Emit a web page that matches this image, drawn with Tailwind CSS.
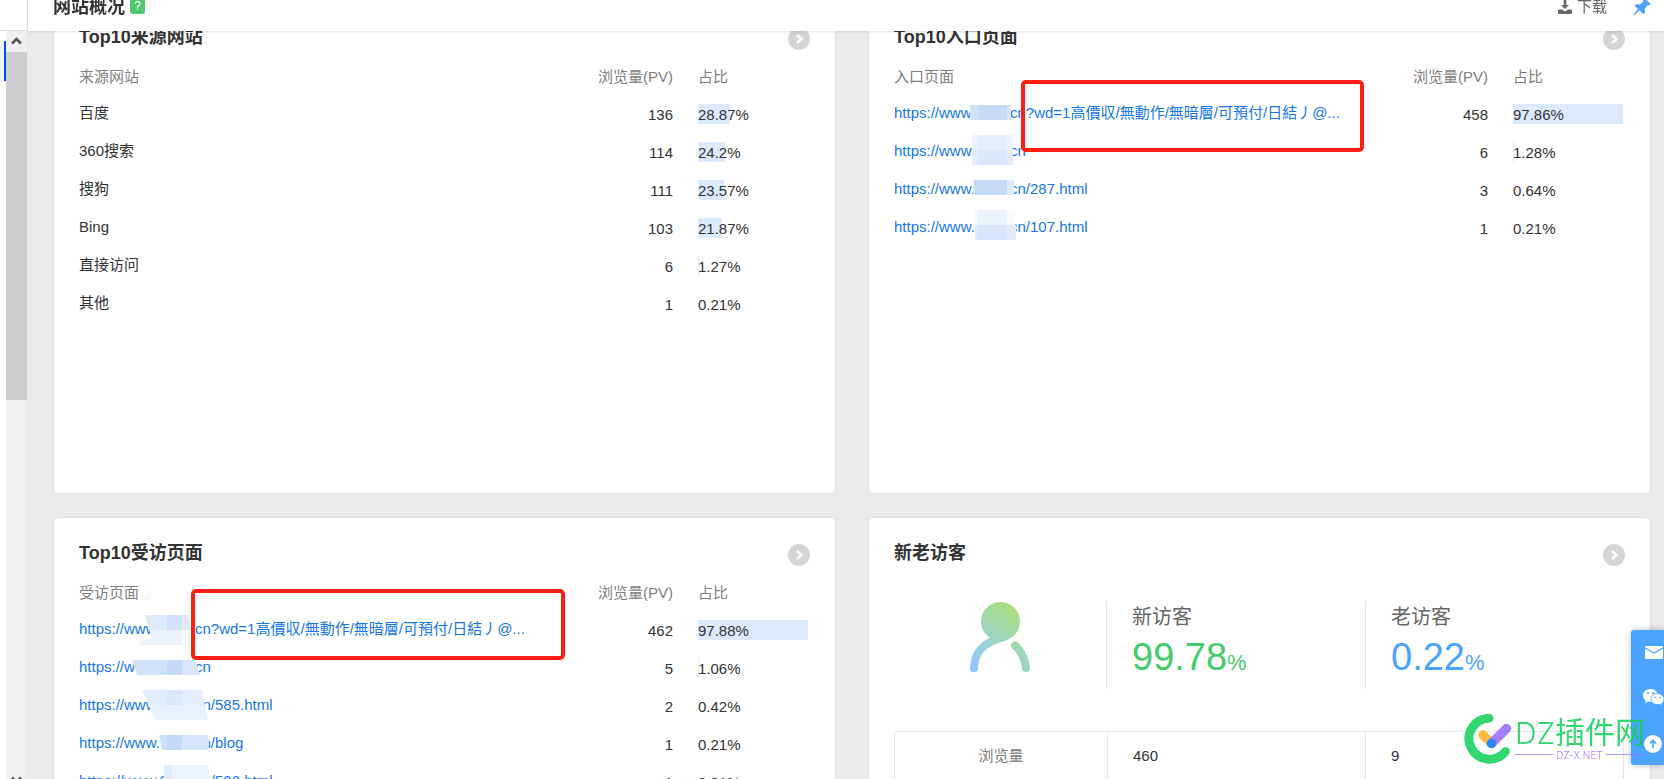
<!DOCTYPE html>
<html lang="zh-CN">
<head>
<meta charset="utf-8">
<title>网站概况</title>
<script src="https://cdn.jsdelivr.net/npm/@tailwindcss/browser@4"></script>
</head>
<body class="h-screen overflow-hidden bg-[#ebebeb] font-['Liberation_Sans','Noto_Sans_CJK_SC',sans-serif] text-[15px] leading-5 text-[#333]">
<svg class="hidden" aria-hidden="true">
  <symbol id="more" viewBox="0 0 22 22"><circle cx="11" cy="11" r="11" fill="#d4d5d7"/><path d="M9 7l4.500 4-4.500 4" fill="none" stroke="#fff" stroke-width="2.400"/></symbol>
</svg>

<div class="flex h-full">
  <!-- side navigation, collapsed, with its scroll bar -->
  <aside class="flex w-7 shrink-0 flex-col border-r border-[#e6e6e6] bg-white">
    <div class="h-[31px] shrink-0 border-b border-[#e2e2e2]"></div>
    <div class="flex min-h-0 flex-1">
      <div class="w-[6px] pt-[10px]"><div class="h-10 border-r-2 border-[#0052d9] bg-[#f0f4fa]"></div></div>
      <div class="flex flex-1 flex-col justify-between overflow-hidden bg-[#f0f0f0]">
        <div class="flex flex-col">
          <svg class="h-[21px] w-[21px]" viewBox="0 0 21 21"><path d="M6 12.500l4.500-4.500L15 12.500" fill="none" stroke="#555" stroke-width="2.600"/></svg>
          <div class="h-[348px] bg-[#cdcdcd]"></div>
        </div>
        <svg class="-mb-3 h-[21px] w-[21px]" viewBox="0 0 21 21"><path d="M6 7.500l4.500 4.500L15 7.500" fill="none" stroke="#555" stroke-width="2.600"/></svg>
      </div>
    </div>
  </aside>

  <div class="min-w-0 flex-1">
    <header class="fixed -top-[18px] right-0 left-7 z-10 flex h-[49px] items-center bg-white pr-3 pl-[25px] shadow-[0_1px_3px_rgba(0,0,0,0.12)]">
      <h1 class="text-[18px] font-bold">网站概况</h1>
      <button class="ml-[5px] h-[15px] w-[15px] rounded-[3px] bg-[#4fc76f] text-[12px] leading-[15px] text-white" aria-label="帮助">?</button>
      <button class="ml-auto flex items-center gap-[5px] text-[#666]">
        <svg class="h-[14px] w-[14px]" viewBox="0 0 14 14" fill="#666"><path d="M5.700 0h2.600v5h2.700L7 9 3 5h2.700z"/><path d="M1 9.500h3l3 2 3-2h3q1 0 1 1V13q0 1-1 1H1q-1 0-1-1v-2.500q0-1 1-1z"/></svg>
        下载
      </button>
      <button class="ml-[25px]" aria-label="固定">
        <svg class="h-5 w-5" viewBox="0 0 20 20" fill="#4ba4ff"><path d="M12 1l7 6-1.500 1.200-1.500-.2-3.200 3.500.2 4-1.500 1.500-4-3.700L2 18.500 1.300 18 5.800 12 2.500 8.500 4 7.200l4 .3 3.500-3.300-.8-1.700z"/></svg>
      </button>
    </header>

    <main class="grid grid-cols-2 gap-x-8 gap-y-[23px] pt-px pr-[13px] pl-[25px]">

      <section class="relative h-[493px] rounded-sm border border-[#e0e0e0] bg-white pr-[26px] pl-[25px]">
        <div class="flex justify-between pt-[23px]">
          <h2 class="h-6 text-[18px] leading-6 font-bold">Top10来源网站</h2>
          <button class="-mr-px mt-[3px] h-[22px] w-[22px]" aria-label="更多"><svg class="h-full w-full"><use href="#more"/></svg></button>
        </div>
        <table class="mt-[9px] w-full">
          <thead><tr class="h-9 text-[#808080]"><th class="pb-px text-left font-normal">来源网站</th><th class="w-24 pb-px text-right font-normal">浏览量(PV)</th><th class="w-[136px] pb-px pl-[25px] text-left font-normal">占比</th></tr></thead>
          <tbody>
            <tr class="h-[38px]"><td class="pb-[3px]">百度</td><td class="pt-[2px] text-right">136</td><td class="pl-[25px]"><div class="h-5 bg-[#dceafd] leading-[22px] whitespace-nowrap" style="width:32px">28.87%</div></td></tr>
            <tr class="h-[38px]"><td class="pb-[3px]">360搜索</td><td class="pt-[2px] text-right">114</td><td class="pl-[25px]"><div class="h-5 bg-[#dceafd] leading-[22px] whitespace-nowrap" style="width:27px">24.2%</div></td></tr>
            <tr class="h-[38px]"><td class="pb-[3px]">搜狗</td><td class="pt-[2px] text-right">111</td><td class="pl-[25px]"><div class="h-5 bg-[#dceafd] leading-[22px] whitespace-nowrap" style="width:26px">23.57%</div></td></tr>
            <tr class="h-[38px]"><td class="pb-[3px]">Bing</td><td class="pt-[2px] text-right">103</td><td class="pl-[25px]"><div class="h-5 bg-[#dceafd] leading-[22px] whitespace-nowrap" style="width:24px">21.87%</div></td></tr>
            <tr class="h-[38px]"><td class="pb-[3px]">直接访问</td><td class="pt-[2px] text-right">6</td><td class="pl-[25px]"><div class="h-5 bg-[#dceafd] leading-[22px] whitespace-nowrap" style="width:1px">1.27%</div></td></tr>
            <tr class="h-[38px]"><td class="pb-[3px]">其他</td><td class="pt-[2px] text-right">1</td><td class="pl-[25px]"><div class="h-5 bg-[#dceafd] leading-[22px] whitespace-nowrap" style="width:0px">0.21%</div></td></tr>
          </tbody>
        </table>
      </section>

      <section class="relative h-[493px] rounded-sm border border-[#e0e0e0] bg-white pr-[26px] pl-[25px]">
        <div class="flex justify-between pt-[23px]">
          <h2 class="h-6 text-[18px] leading-6 font-bold">Top10入口页面</h2>
          <button class="-mr-px mt-[3px] h-[22px] w-[22px]" aria-label="更多"><svg class="h-full w-full"><use href="#more"/></svg></button>
        </div>
        <table class="mt-[9px] w-full">
          <thead><tr class="h-9 text-[#808080]"><th class="pb-px text-left font-normal">入口页面</th><th class="w-24 pb-px text-right font-normal">浏览量(PV)</th><th class="w-[136px] pb-px pl-[25px] text-left font-normal">占比</th></tr></thead>
          <tbody>
            <tr class="h-[38px]"><td class="pb-[3px]"><a href="#" class="flex whitespace-nowrap text-[#1677e6]"><span class="w-[116px]">https://www.</span><span>cn?wd=1高價収/無動作/無暗層/可預付/日結丿@...</span></a></td><td class="pt-[2px] text-right">458</td><td class="pl-[25px]"><div class="h-5 bg-[#dceafd] leading-[22px] whitespace-nowrap" style="width:110px">97.86%</div></td></tr>
            <tr class="h-[38px]"><td class="pb-[3px]"><a href="#" class="flex whitespace-nowrap text-[#1677e6]"><span class="w-[116px]">https://www.</span><span>cn</span></a></td><td class="pt-[2px] text-right">6</td><td class="pl-[25px]"><div class="h-5 bg-[#dceafd] leading-[22px] whitespace-nowrap" style="width:1px">1.28%</div></td></tr>
            <tr class="h-[38px]"><td class="pb-[3px]"><a href="#" class="flex whitespace-nowrap text-[#1677e6]"><span class="w-[116px]">https://www.</span><span>cn/287.html</span></a></td><td class="pt-[2px] text-right">3</td><td class="pl-[25px]"><div class="h-5 bg-[#dceafd] leading-[22px] whitespace-nowrap" style="width:0px">0.64%</div></td></tr>
            <tr class="h-[38px]"><td class="pb-[3px]"><a href="#" class="flex whitespace-nowrap text-[#1677e6]"><span class="w-[116px]">https://www.</span><span>cn/107.html</span></a></td><td class="pt-[2px] text-right">1</td><td class="pl-[25px]"><div class="h-5 bg-[#dceafd] leading-[22px] whitespace-nowrap" style="width:0px">0.21%</div></td></tr>
          </tbody>
        </table>
        <!-- pixelated cover over the domain names -->
        <svg class="pointer-events-none absolute top-[103px] left-[101px] h-[136px] w-[46px]" viewBox="0 0 46 136" shape-rendering="crispEdges">
          <path d="M0 0h41v15H0z" fill="#d9e6fa"/><path d="M1 0h8v15H1z" fill="#d2e2f9"/><path d="M9 0h28v15H9z" fill="#c7dbf7"/>
          <path d="M2 30h41v15H2z" fill="#edf4fd"/><path d="M8 30h29v15H8z" fill="#e6effc"/><path d="M2 45h41v15H2z" fill="#e2ecfb"/><path d="M8 45h29v15H8z" fill="#dbe8fb"/>
          <path d="M3 75h41v15H3z" fill="#dfeafb"/><path d="M4 75h33v15H4z" fill="#c7dbf7"/>
          <path d="M4 105h41v15H4z" fill="#f8fafe"/><path d="M7 105h30v15H7z" fill="#ebf3fd"/><path d="M5 120h41v15H5z" fill="#dfebfb"/><path d="M7 120h30v15H7z" fill="#d9e6f9"/>
        </svg>
        <div class="pointer-events-none absolute top-[78px] left-[152px] h-[72px] w-[343px] rounded-[5px] border-4 border-[#ff1f12]"></div>
      </section>

      <section class="relative h-[493px] rounded-sm border border-[#e0e0e0] bg-white pr-[26px] pl-[25px]">
        <div class="flex justify-between pt-[23px]">
          <h2 class="h-6 text-[18px] leading-6 font-bold">Top10受访页面</h2>
          <button class="-mr-px mt-[3px] h-[22px] w-[22px]" aria-label="更多"><svg class="h-full w-full"><use href="#more"/></svg></button>
        </div>
        <table class="mt-[9px] w-full">
          <thead><tr class="h-9 text-[#808080]"><th class="pb-px text-left font-normal">受访页面</th><th class="w-24 pb-px text-right font-normal">浏览量(PV)</th><th class="w-[136px] pb-px pl-[25px] text-left font-normal">占比</th></tr></thead>
          <tbody>
            <tr class="h-[38px]"><td class="pb-[3px]"><a href="#" class="flex whitespace-nowrap text-[#1677e6]"><span class="w-[116px]">https://www.</span><span>cn?wd=1高價収/無動作/無暗層/可預付/日結丿@...</span></a></td><td class="pt-[2px] text-right">462</td><td class="pl-[25px]"><div class="h-5 bg-[#dceafd] leading-[22px] whitespace-nowrap" style="width:110px">97.88%</div></td></tr>
            <tr class="h-[38px]"><td class="pb-[3px]"><a href="#" class="flex whitespace-nowrap text-[#1677e6]"><span class="w-[116px]">https://www.</span><span>cn</span></a></td><td class="pt-[2px] text-right">5</td><td class="pl-[25px]"><div class="h-5 bg-[#dceafd] leading-[22px] whitespace-nowrap" style="width:1px">1.06%</div></td></tr>
            <tr class="h-[38px]"><td class="pb-[3px]"><a href="#" class="flex whitespace-nowrap text-[#1677e6]"><span class="w-[116px]">https://www.</span><span>cn/585.html</span></a></td><td class="pt-[2px] text-right">2</td><td class="pl-[25px]"><div class="h-5 bg-[#dceafd] leading-[22px] whitespace-nowrap" style="width:0px">0.42%</div></td></tr>
            <tr class="h-[38px]"><td class="pb-[3px]"><a href="#" class="flex whitespace-nowrap text-[#1677e6]"><span class="w-[116px]">https://www.</span><span>cn/blog</span></a></td><td class="pt-[2px] text-right">1</td><td class="pl-[25px]"><div class="h-5 bg-[#dceafd] leading-[22px] whitespace-nowrap" style="width:0px">0.21%</div></td></tr>
            <tr class="h-[38px]"><td class="pb-[3px]"><a href="#" class="flex whitespace-nowrap text-[#1677e6]"><span class="w-[116px]">https://www.9</span><span>cn/502.html</span></a></td><td class="pt-[2px] text-right">1</td><td class="pl-[25px]"><div class="h-5 bg-[#dceafd] leading-[22px] whitespace-nowrap" style="width:0px">0.21%</div></td></tr>
          </tbody>
        </table>
        <!-- pixelated cover over the domain names -->
        <svg class="pointer-events-none absolute top-[67px] left-[76px] h-[204px] w-[84px]" viewBox="0 0 84 204">
          <defs><clipPath id="cover"><path d="M13 15L21 4v11zM15 30h43l3 15v15H7q5-6 15-6zM2 75h63l5 15H7zM12 105h60l6 30H25zM29 150h50v15H32zM34 180h45v24H34z"/></clipPath></defs>
          <g clip-path="url(#cover)" shape-rendering="crispEdges">
            <path d="M0 0h84v15H0z" fill="#f5f7fd"/>
            <path d="M0 30h84v15H0z" fill="#dfeafa"/><path d="M37 30h15v15H37z" fill="#cfe0f8"/><path d="M0 45h84v15H0z" fill="#ecf3fd"/><path d="M52 45h15v15H52z" fill="#f7faff"/>
            <path d="M0 75h84v15H0z" fill="#d0e1f8"/><path d="M37 75h15v15H37z" fill="#c5d9f6"/><path d="M52 75h30v15H52z" fill="#dae7fa"/>
            <path d="M0 105h84v15H0z" fill="#e3edfb"/><path d="M37 105h15v15H37z" fill="#dbe7fa"/><path d="M0 120h84v15H0z" fill="#eaf2fd"/>
            <path d="M0 150h37v15H0z" fill="#cfe0f9"/><path d="M37 150h15v15H37z" fill="#c4d9f7"/><path d="M52 150h32v15H52z" fill="#d8e6fa"/>
            <path d="M0 180h42v24H0z" fill="#e2ecfc"/><path d="M42 180h42v24H42z" fill="#edf4fd"/>
          </g>
        </svg>
        <div class="pointer-events-none absolute top-[71px] left-[137px] h-[71px] w-[374px] rounded-[5px] border-4 border-[#ff1f12]"></div>
      </section>

      <section class="relative h-[493px] rounded-sm border border-[#e0e0e0] bg-white pr-[26px] pl-[25px]">
        <div class="flex justify-between pt-[23px]">
          <h2 class="h-6 text-[18px] leading-6 font-bold">新老访客</h2>
          <button class="-mr-px mt-[3px] h-[22px] w-[22px]" aria-label="更多"><svg class="h-full w-full"><use href="#more"/></svg></button>
        </div>
        <div class="mt-[35px] grid h-[88px] grid-cols-[212px_1fr_1fr]">
          <div class="flex justify-center">
            <svg class="h-[72px] w-[60px]" viewBox="0 0 60 72">
              <defs><linearGradient id="visitor" gradientUnits="userSpaceOnUse" x1="3" y1="62" x2="44" y2="6"><stop offset="0" stop-color="#94c9ff"/><stop offset=".45" stop-color="#9ad4c6"/><stop offset="1" stop-color="#a8df7a"/></linearGradient>
              <linearGradient id="visitorArm" gradientUnits="userSpaceOnUse" x1="56" y1="70" x2="40" y2="40"><stop offset="0" stop-color="#9bd3c8"/><stop offset="1" stop-color="#a0d8a9"/></linearGradient></defs>
              <g fill="url(#visitor)"><circle cx="30.500" cy="20.500" r="19.500"/><path d="M20 37C8 42 1 51 0 67a4 4 0 0 0 8 .500C9 51 17 45 36 39.500L28 30z"/></g>
              <path d="M45 44.500C51 50 55 58 56 67" fill="none" stroke="url(#visitorArm)" stroke-width="8" stroke-linecap="round"/>
            </svg>
          </div>
          <div class="border-l border-[#e6e6e6] pt-1 pl-[25px] text-[#47cb6c]">
            <div class="text-[20px] leading-6 text-[#666]">新访客</div>
            <div class="mt-[6px] text-[38px] leading-11">99.78<span class="text-[22px]">%</span></div>
          </div>
          <div class="border-l border-[#e6e6e6] pt-1 pl-[25px] text-[#4ba4ff]">
            <div class="text-[20px] leading-6 text-[#666]">老访客</div>
            <div class="mt-[6px] text-[38px] leading-11">0.22<span class="text-[22px]">%</span></div>
          </div>
        </div>
        <table class="mt-[42px] w-full table-fixed border-collapse">
          <tbody><tr class="h-[49px]"><th class="w-[213px] border border-[#e6e6e6] font-normal text-[#808080]">浏览量</th><td class="border border-[#e6e6e6] pl-[25px]">460</td><td class="border border-[#e6e6e6] pl-[25px]">9</td></tr>
          <tr class="h-[49px]"><th class="border border-[#e6e6e6]"></th><td class="border border-[#e6e6e6]"></td><td class="border border-[#e6e6e6]"></td></tr></tbody>
        </table>
      </section>
    </main>
  </div>
</div>

<!-- floating contact bar, partly beyond the right edge -->
<nav class="fixed right-0 bottom-[14px] z-20 flex h-[135px] w-[33px] flex-col items-end justify-between rounded-l-[3px] bg-[#4ba4ff] pt-4 pb-3 shadow-[0_0_6px_rgba(0,0,0,0.25)]">
  <button class="mr-px" aria-label="邮件"><svg class="block h-[13px] w-[18px]" viewBox="0 0 18 13"><rect width="18" height="13" rx="1" fill="#fff"/><path d="M0 2l9 5 9-5" fill="none" stroke="#4ba4ff" stroke-width="1.200"/></svg></button>
  <button class="pt-px" aria-label="微信"><svg class="block h-[18px] w-[21px]" viewBox="0 0 21 18"><path d="M7.500 0C3.300 0 0 2.900 0 6.500c0 2 1 3.800 2.700 5L2 14l3-1.500c.8.200 1.600.3 2.500.3C11.700 12.800 15 10 15 6.500S11.700 0 7.500 0z" fill="#fff"/><path d="M14.500 4.500c-3.800 0-6.500 2.500-6.500 5.500s2.700 5.600 6.500 5.600c.7 0 1.500-.1 2.200-.3l2.500 1.400-.5-2.200C20.200 13.400 21 12 21 10c0-3-2.900-5.500-6.500-5.500z" fill="#fff" stroke="#4ba4ff" stroke-width=".8"/><g fill="#4ba4ff"><circle cx="5" cy="4" r="1"/><circle cx="10" cy="4" r="1"/><circle cx="12.500" cy="8.500" r=".8"/><circle cx="16.800" cy="8.500" r=".8"/></g></svg></button>
  <button class="mr-[2px]" aria-label="返回顶部"><svg class="block h-[18px] w-[18px]" viewBox="0 0 18 18"><circle cx="9" cy="9" r="9" fill="#fff"/><path d="M9 13.500V5.500M5.800 8.500L9 5.300l3.200 3.200" fill="none" stroke="#4ba4ff" stroke-width="1.600"/></svg></button>
</nav>

<!-- site watermark -->
<div class="pointer-events-none fixed right-5 bottom-[15px] z-30 flex items-center gap-[3px] opacity-85">
  <svg class="h-[51px] w-[48px]" viewBox="0 0 48 51" fill="none" stroke-linecap="round">
    <path d="M25 5.200A20.500 20.500 0 1 0 41.500 38.500" stroke="#10d058" stroke-width="9"/>
    <path d="M19 22l8.500 8.500" stroke="#ffae1f" stroke-width="9.500"/>
    <path d="M42.500 15.500L27.500 30.500" stroke="#9669ff" stroke-width="9.500"/>
    <circle cx="27.500" cy="30.500" r="4.700" fill="#0073f5"/>
  </svg>
  <div class="w-[129px]">
    <div class="flex items-center text-[30px] leading-8 whitespace-nowrap text-[#10d058]"><span class="w-[40px] font-[Inter,sans-serif] font-light">DZ</span><span>插件网</span></div>
    <div class="flex items-center gap-[3px] font-[Inter,sans-serif] text-[10px] leading-3 font-light text-[#9669ff]"><span class="h-px flex-1 bg-[#9669ff]/80"></span>DZ-X.NET<span class="h-px flex-1 bg-[#9669ff]/80"></span></div>
  </div>
</div>
</body>
</html>
